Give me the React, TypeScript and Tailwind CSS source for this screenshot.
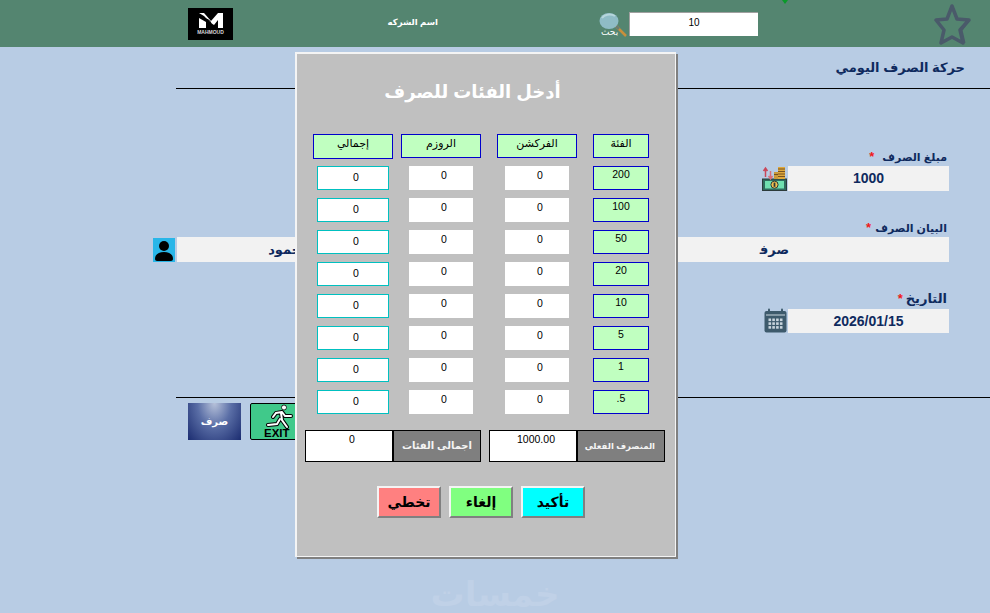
import React from 'react';

const denominations = ['200', '100', '50', '20', '10', '5', '1', '.5'];

function Logo() {
  return (
    <div className="flex h-[32px] w-[45px] flex-col items-center justify-center bg-black">
      <svg width="26" height="17" viewBox="0 0 26 17">
        <path d="M1 1h5l7 8 7-8h5v15h-5V8l-4 5-3-2-7-7z" fill="#fff" />
        <path d="M1 6l7 4v6H1z" fill="#fff" />
        <path d="M8 7c3 1 5 3 5 6" stroke="#000" strokeWidth="1.2" fill="none" />
      </svg>
      <div className="mt-[1px] text-[5px] leading-[5px] font-bold text-[#d8d8d8]">MAHMOUD</div>
    </div>
  );
}

function SearchIcon() {
  return (
    <div className="relative h-[26px] w-[30px]">
      <svg width="30" height="26" viewBox="0 0 30 26" className="absolute top-0 left-0">
        <path d="M17 14l10 10" stroke="#c98f3c" strokeWidth="2.5" />
        <path d="M17 14l3 3" stroke="#6b7c74" strokeWidth="2.5" />
        <ellipse cx="10" cy="9" rx="9.5" ry="8" fill="#8fbcc6" />
        <path d="M3 6c2-3 8-5 13-2" stroke="#b7d6dc" strokeWidth="2" fill="none" />
      </svg>
      <span className="absolute top-[15px] left-[2px] text-[9px] leading-[11px] text-white">بحث</span>
    </div>
  );
}

function StarIcon() {
  return (
    <svg width="38" height="44" viewBox="0 0 38 44">
      <path
        d="M18 4l5 13 12 1-9 10 3 13-11-6-11 6 3-13-8-10 11-1z"
        fill="none"
        stroke="#4a5a6a"
        strokeWidth="3.5"
        strokeLinejoin="round"
      />
      <path d="M33 20l-6 8 3 13" fill="none" stroke="#4a5a6a" strokeWidth="3" />
    </svg>
  );
}

function MoneyIcon() {
  return (
    <svg width="25" height="25" viewBox="0 0 25 25">
      <rect x="0.5" y="13" width="24" height="11.5" fill="#2f6b5e" stroke="#2b3a3a" />
      <rect x="3" y="15" width="19" height="7.5" fill="#6fe0b0" />
      <circle cx="12.5" cy="18.7" r="3.6" fill="#f2c14e" stroke="#2b3a3a" />
      <rect x="11.6" y="16.6" width="1.8" height="4.2" fill="#2b3a3a" />
      <rect x="12" y="6" width="10" height="7" fill="#c99a3a" />
      <rect x="16" y="1" width="7" height="12" fill="#e0a93c" />
      <path d="M16 3h7M16 5.5h7M16 8h7M16 10.5h7M12 8.5h4" stroke="#6b4a1e" strokeWidth="0.9" />
      <path d="M3.5 11V3M1.5 5l2-3 2 3" stroke="#c9475a" strokeWidth="1.5" fill="none" />
      <path d="M8.5 5v7M6.5 10l2 3 2-3" stroke="#d9707a" strokeWidth="1.5" fill="none" />
    </svg>
  );
}

function CalendarIcon() {
  const dots = [];
  for (let y = 0; y < 3; y++) {
    for (let x = 0; x < 4; x++) {
      dots.push(<rect key={`${x}-${y}`} x={4.5 + x * 3.8} y={10.5 + y * 3.8} width="2.6" height="2.6" fill="#c9d5de" />);
    }
  }
  return (
    <svg width="23" height="25" viewBox="0 0 23 25">
      <rect x="0.5" y="3" width="22" height="21.5" rx="2" fill="#3d5a6c" />
      <rect x="2" y="6.5" width="19" height="1" fill="#c9d5de" />
      <rect x="4" y="0.5" width="2" height="5" rx="1" fill="#3d5a6c" />
      <rect x="17" y="0.5" width="2" height="5" rx="1" fill="#3d5a6c" />
      {dots}
    </svg>
  );
}

function UserIcon() {
  return (
    <div className="h-[24px] w-[22px] bg-[#29b6e8]">
      <svg width="22" height="24" viewBox="0 0 22 24">
        <circle cx="11" cy="8" r="5" fill="#000" />
        <path d="M2 21c0-5 4-7 9-7s9 2 9 7c0 1-1 2-2 2H4c-1 0-2-1-2-2z" fill="#000" />
      </svg>
    </div>
  );
}

function ExitIcon() {
  return (
    <div className="flex h-[37px] w-[48px] flex-col items-start rounded-[2px] border border-black bg-[#40c98a]">
      <svg width="30" height="25" viewBox="0 0 30 25" className="ml-[14px]">
        <circle cx="19" cy="3.5" r="2.5" fill="#fff" stroke="#000" strokeWidth="0.8" />
        <path
          d="M17 8l-6 1-3 4M17 8l3 4 6 0M16 9l1 7 5 7M15 15l-3 5-9 1"
          fill="none"
          stroke="#000"
          strokeWidth="4"
          strokeLinecap="round"
        />
        <path
          d="M17 8l-6 1-3 4M17 8l3 4 6 0M16 9l1 7 5 7M15 15l-3 5-9 1"
          fill="none"
          stroke="#fff"
          strokeWidth="2"
          strokeLinecap="round"
        />
      </svg>
      <span className="ml-[13px] text-[11.5px] leading-[9px] font-bold text-black">EXIT</span>
    </div>
  );
}

function Label({ children, gap, size }: { children: string; gap: string; size: string }) {
  return (
    <div dir="rtl" className={`${size} flex h-[18px] items-center leading-[18px] font-bold text-[#0f2a5e]`}>
      <span>{children}</span>
      <span className={`${gap} text-[13px] text-[#f01818]`}>*</span>
    </div>
  );
}

function HeadCell({ children, tall }: { children: string; tall?: boolean }) {
  return (
    <div
      className={`${tall ? '-mb-[1px] h-[25px]' : 'h-[24px]'} w-full border border-[#0000cc] bg-[#c0ffc0] pt-[1px] text-center text-[11px] leading-[14px] text-black`}
    >
      {children}
    </div>
  );
}

function DenominationModal() {
  return (
    <div className="absolute top-[52px] left-[295px] h-[505px] w-[381px] border-t-2 border-r border-b border-l-2 border-[#f4f4f4] bg-[#c0c0c0] shadow-[2px_2px_0_#808080]">
      <div dir="rtl" className="pt-[22px] pr-[27px] text-center text-[18px] leading-[32px] font-bold text-white">
        أدخل الفئات للصرف
      </div>

      <div className="mt-[26px] ml-[16px] grid grid-cols-[88px_96px_96px_56px] gap-y-[8px]">
        <div className="w-[80px]"><HeadCell tall>إجمالي</HeadCell></div>
        <div className="w-[80px]"><HeadCell>الروزم</HeadCell></div>
        <div className="w-[80px]"><HeadCell>الفركشن</HeadCell></div>
        <HeadCell>الفئة</HeadCell>

        {denominations.map((value) => (
          <React.Fragment key={value}>
            <div className="ml-[4px] flex h-[24px] w-[72px] justify-center border border-[#00c0c0] bg-white pt-[3px] pl-[6px] text-[10.5px] leading-[14px] text-black">
              0
            </div>
            <div className="ml-[8px] flex h-[24px] w-[64px] justify-center bg-white pt-[2px] pl-[6px] text-[10.5px] leading-[14px] text-black">
              0
            </div>
            <div className="ml-[8px] flex h-[24px] w-[64px] justify-center bg-white pt-[2px] pl-[6px] text-[10.5px] leading-[14px] text-black">
              0
            </div>
            <div className="flex h-[24px] justify-center border border-[#0000cc] bg-[#c0ffc0] text-[10.5px] leading-[14px] text-black">
              {value}
            </div>
          </React.Fragment>
        ))}
      </div>

      <div className="mt-[16px] ml-[8px] flex h-[32px] text-[10.5px] leading-[14px]">
        <div className="h-full w-[88px] border border-black bg-white pt-[1px] pl-[6px] text-center text-black">0</div>
        <div dir="rtl" className="h-full w-[88px] border border-black bg-[#7f7f7f] pt-[8px] pr-[8px] text-[10px] font-bold text-[#f4f4f4]">
          اجمالى الفئات
        </div>
        <div className="ml-[8px] h-full w-[88px] border border-black bg-white pt-[1px] pl-[6px] text-center text-black">1000.00</div>
        <div dir="rtl" className="h-full w-[88px] border border-black bg-[#7f7f7f] pt-[8px] pr-[9px] text-[8.5px] font-bold text-[#f4f4f4]">
          المنصرف الفعلي
        </div>
      </div>

      <div className="mt-[24px] ml-[80px] flex gap-[8px]">
        <ModalButton className="bg-[#ff8080]">تخطي</ModalButton>
        <ModalButton className="bg-[#80ff80]">إلغاء</ModalButton>
        <ModalButton className="bg-[#00ffff]">تأكيد</ModalButton>
      </div>
    </div>
  );
}

function ModalButton({ children, className }: { children: string; className: string }) {
  return (
    <div
      className={`${className} flex h-[32px] w-[64px] items-center justify-center border-2 border-t-[#f4f4f4] border-r-[#808080] border-b-[#808080] border-l-[#f4f4f4] text-[14px] font-bold text-black`}
    >
      {children}
    </div>
  );
}

export default function App() {
  return (
    <div className="relative h-[613px] w-[990px] overflow-hidden bg-[#b8cce4] font-['Liberation_Sans','DejaVu_Sans',sans-serif]">
      {/* top bar */}
      <div className="relative flex h-[47px] items-center bg-[#548570] pl-[188px]">
        <Logo />
        <div dir="rtl" className="ml-[153px] w-[52px] pb-[3px] text-[8.5px] font-bold whitespace-nowrap text-white">
          اسم الشركه
        </div>
        <div className="mt-[3px] ml-[161px]"><SearchIcon /></div>
        <div className="flex h-[24px] w-[129px] justify-center border-t border-l border-[#a0a0a0] bg-white text-[10px] leading-[19px] text-black">
          10
        </div>
        <div className="ml-[176px]"><StarIcon /></div>
        <svg width="6" height="4" viewBox="0 0 6 4" className="absolute top-0 left-[782px]">
          <path d="M0 0h6L3 4z" fill="#0a9a2a" />
        </svg>
      </div>

      {/* form */}
      <div className="ml-[176px] border-b border-black pt-[11px] pr-[25px] pb-[10px]" dir="rtl">
        <div className="text-[13px] leading-[20px] font-bold text-[#0f2a5e]">حركة الصرف اليومي</div>
      </div>

      <div className="flex h-[308px] flex-col items-end pt-[59px] pr-[41px]">
        <div className="flex flex-col items-end">
          <div className="pr-[2px]"><Label size="text-[11px]" gap="mr-[8px]">مبلغ الصرف</Label></div>
          <div className="flex items-center">
            <MoneyIcon />
            <div className="ml-[1px] h-[25px] w-[161px] bg-[#f2f2f2] text-center text-[14px] leading-[25px] font-bold text-[#0f2a5e]">1000</div>
          </div>
        </div>

        <div className="mt-[28px] flex flex-col items-end">
          <div className="pr-[2px]"><Label size="text-[11px]" gap="mr-[4px]">البيان الصرف</Label></div>
          <div className="flex items-center">
            <UserIcon />
            <div dir="rtl" className="ml-[2px] h-[25px] w-[772px] bg-[#f2f2f2] pr-[160px] text-[13px] leading-[25px] font-bold text-[#0f2a5e]">
              صرف
              <span className="mr-[450px]">محمود</span>
            </div>
          </div>
        </div>

        <div className="mt-[28px] flex flex-col items-end">
          <div className="pr-[2px]"><Label size="text-[13px]" gap="mr-[3px]">التاريخ</Label></div>
          <div className="flex items-center">
            <CalendarIcon />
            <div className="ml-[1px] h-[24px] w-[161px] bg-[#f2f2f2] text-center text-[14px] leading-[24px] font-bold text-[#0f2a5e]">2026/01/15</div>
          </div>
        </div>
      </div>

      <div className="ml-[176px] border-t border-black" />

      <div className="mt-[5px] ml-[188px] flex gap-[9px]">
        <div className="flex h-[37px] w-[53px] items-center justify-center bg-[radial-gradient(ellipse_at_50%_0%,#b7c2da_0%,#5a6ea6_45%,#1b2c70_100%)] text-[10px] font-bold text-white">
          صرف
        </div>
        <ExitIcon />
      </div>

      <div className="mt-[134px] text-center text-[34px] leading-[40px] font-bold text-[#c0d1e7]">خمسات</div>

      <DenominationModal />
    </div>
  );
}
